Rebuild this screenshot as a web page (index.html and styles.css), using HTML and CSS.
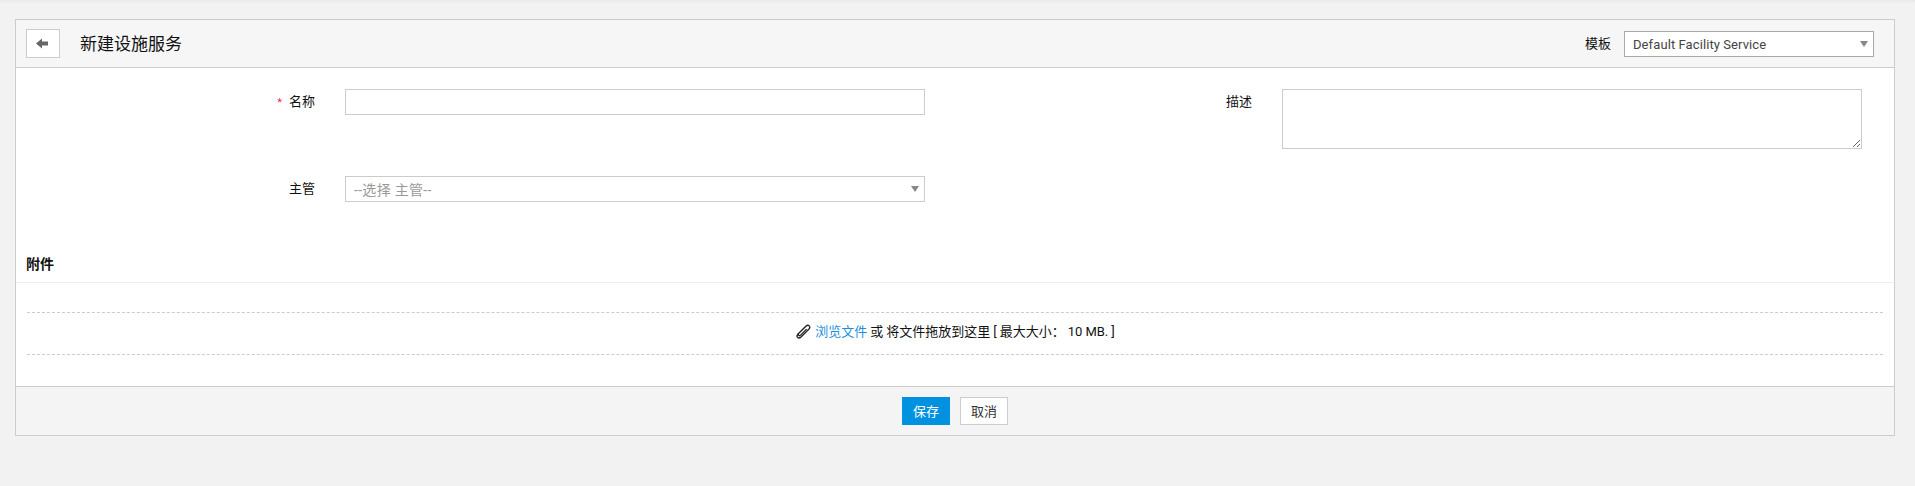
FILE: index.html
```html
<!DOCTYPE html>
<html lang="zh">
<head>
<meta charset="utf-8">
<title>新建设施服务</title>
<link rel="stylesheet" href="styles.css">
</head>
<body>
<div class="topshade"></div>
<main class="panel">
  <header class="head">
    <button class="back" type="button" aria-label="back">
      <svg width="13" height="11" viewBox="0 0 13 11"><path d="M0 5.500 6 .5V3.500H12V7.500H6V10.500Z" fill="#666"/></svg>
    </button>
    <h1 class="title">新建设施服务</h1>
    <label class="tpl-label">模板</label>
    <div class="select tpl-select"><span>Default Facility Service</span><i class="caret"></i></div>
  </header>
  <section class="form">
    <div class="col">
      <div class="row row-name">
        <label class="lbl"><span class="req">*</span>名称</label>
        <input class="input" type="text">
      </div>
      <div class="row">
        <label class="lbl">主管</label>
        <div class="select mgr-select"><span>--选择 主管--</span><i class="caret"></i></div>
      </div>
    </div>
    <div class="col col-right">
      <div class="row">
        <label class="lbl lbl-desc">描述</label>
        <textarea class="area"></textarea>
      </div>
    </div>
  </section>
  <h2 class="section-title">附件</h2>
  <section class="attach">
    <div class="drop">
      <svg class="clip" width="16" height="16" viewBox="0 0 16 16"><path d="M9.800 3.200 3 10c-1.300 1.300-1.300 2.600-.4 3.400s2.100.9 3.400-.4l7.800-7.800c1.200-1.200 1.200-2.500.4-3.300s-2.100-.8-3.300.4L3.800 9.300c-.7.7-.7 1.500-.2 2s1.300.5 2-.2l6-6" fill="none" stroke="#222" stroke-width="1.300"/></svg>
      <span class="drop-text"><a class="link" href="#">浏览文件</a> 或 将文件拖放到这里 [ 最大大小： 10 MB. ]</span>
    </div>
  </section>
  <footer class="foot">
    <button class="btn btn-save" type="button">保存</button>
    <button class="btn btn-cancel" type="button">取消</button>
  </footer>
</main>
</body>
</html>
```

FILE: styles.css
```css
* { box-sizing: border-box; }
html, body { margin: 0; height: 100%; }
body {
  background: #f2f2f2;
  font-family: Roboto, "Noto Sans CJK SC", sans-serif;
  font-size: 13px;
  color: #111;
  padding: 19px 20px 0 15px;
  overflow: hidden;
}
.topshade {
  position: absolute; left: 0; right: 0; top: 0; height: 4px;
  background: linear-gradient(#e9e9e9, #f2f2f2);
}
.panel {
  position: relative;
  height: 417px;
  background: #fff;
  border: 1px solid #ccc;
  display: flex;
  flex-direction: column;
}
.head {
  height: 48px;
  flex: none;
  background: #f6f6f6;
  border-bottom: 1px solid #ccc;
  display: flex;
  align-items: center;
  padding: 0 20px 0 10px;
}
.back {
  width: 34px; height: 29px;
  background: #fff; border: 1px solid #ccc; padding: 0 2px 0 0;
  display: flex; align-items: center; justify-content: center;
}
.title { font-size: 17px; font-weight: 400; margin: 0 0 0 20px; color: #111; flex: 1; line-height: 24px; }
.tpl-label { margin-right: 13px; margin-top: -2px; }
.select {
  position: relative;
  display: flex; align-items: center;
  background: #fff;
}
.tpl-select { width: 250px; height: 26px; border: 1px solid #aaa; padding: 1px 8px 0; font-size: 13px; letter-spacing: .09px; color: #444; }
.caret {
  position: absolute; right: 5px; top: 9px;
  border-left: 4px solid transparent; border-right: 4px solid transparent;
  border-top: 6px solid #888;
}
.form { display: flex; height: 176px; flex: none; padding-top: 21px; }
.col { width: 944px; }
.col-right { flex: 1; }
.row { display: flex; align-items: flex-start; }
.row-name { margin-bottom: 61px; }
.lbl { width: 299px; padding: 3px 0 0; text-align: right; margin-right: 30px; flex: none; height: 26px; line-height: 19px; }
.req { color: #e8334a; font-size: 11px; margin-right: 7px; }
.lbl-desc { width: 292px; margin-right: 30px; }
.input, .mgr-select { width: 580px; height: 26px; border: 1px solid #ccc; background: #fff; }
.mgr-select { padding: 0 8px; color: #999; font-size: 14px; letter-spacing: .3px; }
.area { width: 580px; height: 60px; border: 1px solid #ccc; margin: 0; display: block; }
.section-title { margin: 0; padding: 9px 10px 0; height: 39px; border-bottom: 1px solid #eee; font-size: 14px; font-weight: 700; color: #111; line-height: 22px; flex: none; }
.attach { flex: 1; padding: 29px 11px 0 10px; }
.drop {
  height: 43px;
  border-top: 1px dashed #ccc;
  border-bottom: 1px dashed #ccc;
  display: flex; align-items: center; justify-content: center;
  margin-left: 1px;
}
.clip { margin-right: 4px; flex: none; margin-bottom: 3px; }
.drop-text { white-space: pre; position: relative; top: -3px; word-spacing: -.2px; }
.link { color: #1f8fdc; text-decoration: none; }
.foot {
  height: 49px; flex: none;
  background: #f4f4f4;
  border-top: 1px solid #ccc;
  display: flex; justify-content: center; align-items: center; gap: 10px;
}
.btn { width: 48px; height: 28px; font: inherit; padding: 0 0 1px; }
.btn-save { background: #0091e1; color: #fff; border: 0; }
.btn-cancel { background: #fff; color: #333; border: 1px solid #ccc; }
```
